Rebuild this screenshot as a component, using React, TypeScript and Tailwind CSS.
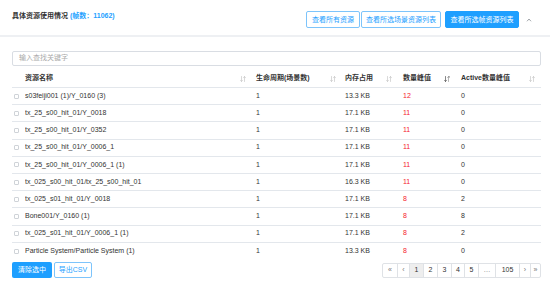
import React from "react";

const rows = [
  ["s03feiji001 (1)/Y_0160 (3)", "1", "13.3 KB", "12", "0"],
  ["tx_25_s00_hit_01/Y_0018", "1", "17.1 KB", "11", "0"],
  ["tx_25_s00_hit_01/Y_0352", "1", "17.1 KB", "11", "0"],
  ["tx_25_s00_hit_01/Y_0006_1", "1", "17.1 KB", "11", "0"],
  ["tx_25_s00_hit_01/Y_0006_1 (1)", "1", "17.1 KB", "11", "0"],
  ["tx_025_s00_hit_01/tx_25_s00_hit_01", "1", "16.3 KB", "11", "0"],
  ["tx_025_s01_hit_01/Y_0018", "1", "17.1 KB", "8", "2"],
  ["Bone001/Y_0160 (1)", "1", "17.1 KB", "8", "8"],
  ["tx_025_s01_hit_01/Y_0006_1 (1)", "1", "17.1 KB", "8", "2"],
  ["Particle System/Particle System (1)", "1", "13.3 KB", "8", "0"],
];

function SortIcon({ active = false }: { active?: boolean }) {
  return (
    <svg width="6" height="6" viewBox="0 0 12 12" className="shrink-0">
      <g fill="none" strokeWidth="1.4" strokeLinecap="round">
        <g stroke={active ? "#555" : "#c8c8c8"}>
          <line x1="3" y1="1" x2="3" y2="11" />
          <polyline points="1,8.5 3,11 5,8.5" />
        </g>
        <g stroke={active ? "#999" : "#c8c8c8"}>
          <line x1="9" y1="1" x2="9" y2="11" />
          <polyline points="7,3.5 9,1 11,3.5" />
          {active && <line x1="9" y1="1" x2="11.5" y2="1" />}
        </g>
      </g>
    </svg>
  );
}

function Checkbox() {
  return <div className="w-[5px] h-[5px] border border-[#cfd3d8] rounded-[1px] bg-white" />;
}

const cols = "grid grid-cols-[13px_225px_89px_58px_58px_86px]";

export default function App() {
  return (
    <div
      className="w-[550px] h-[288px] bg-white text-[#333] overflow-hidden"
      style={{ fontFamily: "'Liberation Sans', 'Noto Sans CJK SC', sans-serif" }}
    >
      <div className="h-[37px] flex justify-between px-[12px] border-b-2 border-[#eef0f3]">
        <div className="pt-[12px] text-[7px] leading-[8px] font-bold">
          具体资源使用情况 <span className="text-[#1e9fff]">(帧数：11062)</span>
        </div>
        <div className="flex items-start pt-[11px]">
          <button className="h-[17px] w-[54px] border border-[#7dc4fb] rounded-[2px] text-[#1e9fff] text-[7px] leading-none bg-white">
            查看所有资源
          </button>
          <button className="h-[17px] w-[80px] ml-[1px] border border-[#7dc4fb] rounded-[2px] text-[#1e9fff] text-[7px] leading-none bg-white">
            查看所选场景资源列表
          </button>
          <button className="h-[17px] w-[74px] ml-[4px] border border-[#1e9fff] rounded-[2px] text-white text-[7px] leading-none bg-[#1e9fff]">
            查看所选帧资源列表
          </button>
          <div className="w-[19px] h-[17px] flex items-center justify-center">
            <svg width="6" height="4" viewBox="0 0 12 8">
              <polyline points="2,6.5 6,2 10,6.5" fill="none" stroke="#8a8f96" strokeWidth="1.6" />
            </svg>
          </div>
        </div>
      </div>

      <div className="px-[12px] pt-[14px]">
        <div className="h-[15px] w-[529px] border border-[#d9dde3] rounded-[2px] flex items-center pl-[6px] text-[7px] text-[#aaa]">
          输入查找关键字
        </div>

        <div className="mt-[4px] w-[529px] text-[7px]">
          <div className={`${cols} h-[18px] items-center border-b border-[#e3e7ec] font-bold`}>
            <div />
            <div className="flex items-center justify-between pr-[4px]">
              <span>资源名称</span>
              <SortIcon />
            </div>
            <div className="flex items-center justify-between pl-[6px] pr-[3px]">
              <span>生命周期(场景数)</span>
              <SortIcon />
            </div>
            <div className="flex items-center justify-between pl-[6px] pr-[5px]">
              <span>内存占用</span>
              <SortIcon />
            </div>
            <div className="flex items-center justify-between pl-[6px] pr-[5px]">
              <span>数量峰值</span>
              <SortIcon active />
            </div>
            <div className="flex items-center justify-between pl-[6px] pr-[6px]">
              <span>Active数量峰值</span>
              <SortIcon />
            </div>
          </div>
          {rows.map((r, i) => (
            <div
              key={i}
              className={`${cols} h-[17.2px] items-center ${i < rows.length - 1 ? "border-b border-[#e3e7ec]" : ""}`}
            >
              <div className="pl-[2px] flex items-center">
                <Checkbox />
              </div>
              <div className="truncate">{r[0]}</div>
              <div className="pl-[6px]">{r[1]}</div>
              <div className="pl-[6px]">{r[2]}</div>
              <div className="pl-[6px] text-[#f5222d]">{r[3]}</div>
              <div className="pl-[6px]">{r[4]}</div>
            </div>
          ))}
        </div>

        <div className="mt-[2px] flex items-start justify-between w-[529px]">
          <div className="flex">
            <button className="h-[16px] w-[40px] rounded-[2px] bg-[#1e9fff] text-white text-[7px] leading-none">
              清除选中
            </button>
            <button className="h-[16px] w-[38px] ml-[2px] rounded-[2px] border border-[#7dc4fb] bg-white text-[#1e9fff] text-[7px] leading-none">
              导出CSV
            </button>
          </div>
          <div className="mt-[1px] flex h-[15px] border border-[#dfe2e6] rounded-[2px] text-[7px] text-[#333]">
            {[
              ["«", 14],
              ["‹", 12],
              ["1", 14],
              ["2", 14],
              ["3", 14],
              ["4", 13],
              ["5", 14],
              ["…", 17],
              ["105", 24],
              ["›", 11],
              ["»", 10],
            ].map(([t, w], i) => (
              <div
                key={i}
                style={{ width: w as number }}
                className={`flex items-center justify-center ${i > 0 ? "border-l border-[#dfe2e6]" : ""} ${
                  t === "1" ? "bg-[#eeeeee]" : ""
                } ${t === "«" || t === "‹" || t === "›" || t === "»" || t === "…" ? "text-[#777]" : ""}`}
              >
                {t as string}
              </div>
            ))}
          </div>
        </div>
      </div>
    </div>
  );
}
